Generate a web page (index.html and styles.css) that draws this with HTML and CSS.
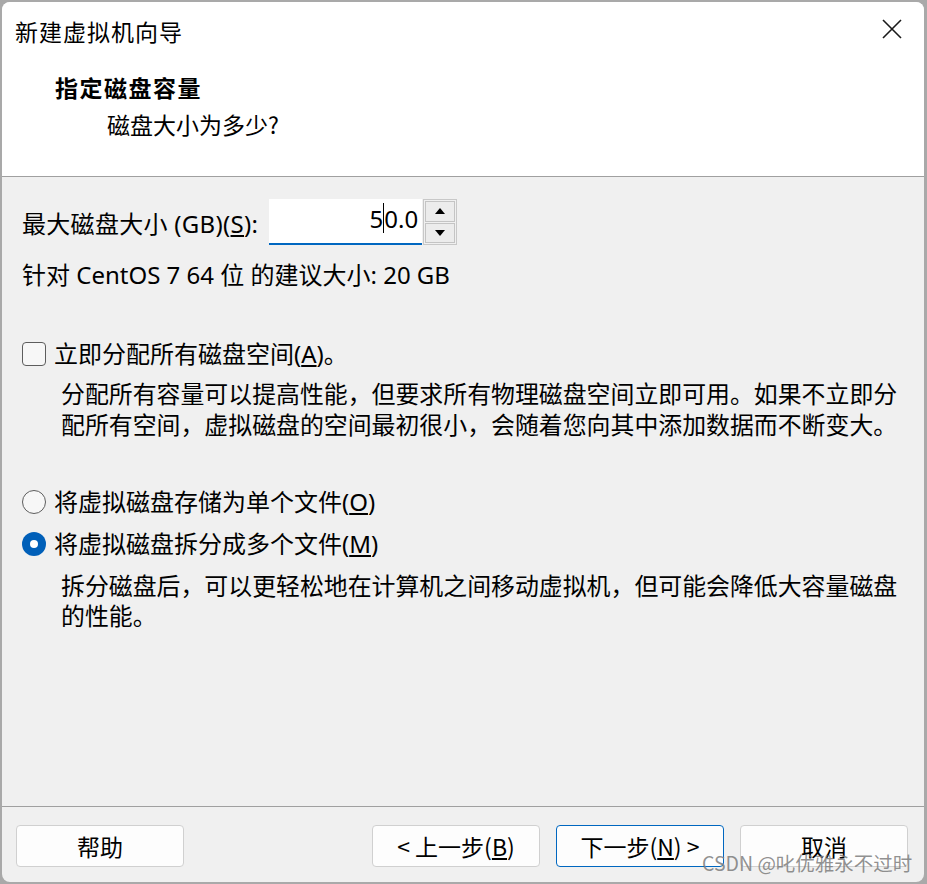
FILE: index.html
```html
<!DOCTYPE html>
<html lang="zh-CN">
<head>
<meta charset="utf-8">
<title>新建虚拟机向导</title>
<link rel="stylesheet" href="styles.css">
</head>
<body>
<div class="window">
  <div class="header">
    <div class="titlebar">
      <span class="title">新建虚拟机向导</span>
      <svg class="close" width="20" height="20" viewBox="0 0 20 20"><path d="M1 1 L19 19 M19 1 L1 19" stroke="#1a1a1a" stroke-width="1.6" fill="none"/></svg>
    </div>
    <div class="heading">指定磁盘容量</div>
    <div class="subheading">磁盘大小为多少?</div>
  </div>
  <div class="content">
    <div class="size-row">
      <span class="size-label">最大磁盘大小 (GB)(<u>S</u>):</span>
      <div class="spin">
        <div class="spin-input">5<span class="caret"></span>0.0</div>
        <div class="spin-btns">
          <div class="spin-btn"><span class="tri-up"></span></div>
          <div class="spin-btn"><span class="tri-down"></span></div>
        </div>
      </div>
    </div>
    <div class="recommend">针对 CentOS 7 64 位 的建议大小: 20 GB</div>
    <div class="option first">
      <span class="checkbox"></span>
      <span>立即分配所有磁盘空间(<u>A</u>)。</span>
    </div>
    <div class="desc">
      <div class="desc-line">分配所有容量可以提高性能，但要求所有物理磁盘空间立即可用。如果不立即分</div>
      <div class="desc-line">配所有空间，虚拟磁盘的空间最初很小，会随着您向其中添加数据而不断变大。</div>
    </div>
    <div class="option second">
      <span class="radio"></span>
      <span>将虚拟磁盘存储为单个文件(<u>O</u>)</span>
    </div>
    <div class="option third">
      <span class="radio checked"></span>
      <span>将虚拟磁盘拆分成多个文件(<u>M</u>)</span>
    </div>
    <div class="desc tight">
      <div class="desc-line">拆分磁盘后，可以更轻松地在计算机之间移动虚拟机，但可能会降低大容量磁盘</div>
      <div class="desc-line">的性能。</div>
    </div>
  </div>
  <div class="footer">
    <div class="btn">帮助</div>
    <div class="spacer"></div>
    <div class="btn">&lt; 上一步(<u>B</u>)</div>
    <div class="btn default">下一步(<u>N</u>) &gt;</div>
    <div class="btn">取消</div>
  </div>
</div>
<div class="watermark">CSDN @叱优雅永不过时</div>
</body>
</html>
```
FILE: styles.css
```css
* { box-sizing: border-box; }
html, body { margin: 0; padding: 0; }
body {
  width: 927px;
  height: 884px;
  background: #a9a9a9;
  font-family: "Noto Sans", "Noto Sans CJK SC", sans-serif;
  color: #000;
  position: relative;
  overflow: hidden;
}
.window {
  margin: 2px 3px 0 2px;
  height: 880px;
  background: #f0f0f0;
  border-radius: 8px;
  overflow: hidden;
  display: flex;
  flex-direction: column;
}
.header {
  height: 175px;
  background: #fff;
  border-bottom: 1px solid #a0a0a0;
  flex: none;
}
.titlebar {
  height: 56px;
  display: flex;
  align-items: center;
  justify-content: space-between;
  padding: 0 22px 0 13px;
}
.title {
  font-family: "Noto Sans CJK SC", sans-serif;
  font-size: 23px;
  letter-spacing: 1px;
  line-height: 30px;
  margin-top: 2px;
}
.close { display: block; margin-top: -2px; }
.heading {
  margin-top: 12px;
  padding-left: 53px;
  font-family: "Noto Sans CJK SC", sans-serif;
  font-size: 23px;
  font-weight: bold;
  letter-spacing: 1.5px;
  line-height: 34px;
}
.subheading {
  margin-top: 3px;
  padding-left: 105px;
  font-family: "Noto Sans CJK SC", sans-serif;
  font-size: 23px;
  line-height: 34px;
}
.content {
  flex: 1;
  padding: 22px 0 0 20px;
  font-size: 24px;
}
.size-row {
  display: flex;
  align-items: center;
  height: 46px;
}
.size-label { line-height: 32px; margin-top: 4px; letter-spacing: 0.3px; }
.spin {
  margin-left: 11px;
  display: flex;
  height: 46px;
}
.spin-input {
  width: 153px;
  height: 46px;
  background: #fff;
  border-bottom: 2px solid #0067c0;
  text-align: right;
  padding-right: 4px;
  line-height: 40px;
  font-size: 24px;
}
.caret {
  display: inline-block;
  width: 1px;
  height: 30px;
  background: #000;
  vertical-align: -5px;
}
.spin-btns {
  width: 34px;
  height: 46px;
  margin-left: 1px;
  border: 1px solid #c8c8c8;
  background: #f0f0f0;
  display: flex;
  flex-direction: column;
  gap: 1px;
  padding: 1px;
}
.spin-btn {
  flex: 1;
  background: #ececec;
  border: 1px solid #c4c4c4;
  display: flex;
  align-items: center;
  justify-content: center;
}
.tri-up, .tri-down {
  width: 0; height: 0;
  border-left: 5px solid transparent;
  border-right: 5px solid transparent;
}
.tri-up { border-bottom: 6px solid #000; }
.tri-down { border-top: 6px solid #000; }
.recommend {
  margin-top: 14px;
  line-height: 32px;
}
.option {
  display: flex;
  align-items: center;
  gap: 8px;
  height: 32px;
  line-height: 32px;
}
.option.first { margin-top: 47px; }
.option.second { margin-top: 47px; }
.option.third { margin-top: 10px; }
.checkbox {
  width: 24px;
  height: 24px;
  border: 1.5px solid #5d5d5d;
  border-radius: 4px;
  background: #f7f7f7;
  flex: none;
}
.radio {
  width: 24px;
  height: 24px;
  border: 1.5px solid #5d5d5d;
  border-radius: 50%;
  background: #f7f7f7;
  flex: none;
  position: relative;
}
.radio.checked {
  border: none;
  background: #005fb8;
}
.radio.checked::after {
  content: "";
  position: absolute;
  left: 8px; top: 8px;
  width: 8px; height: 8px;
  border-radius: 50%;
  background: #fff;
}
.desc {
  margin: 7px 0 0 39px;
  font-family: "Noto Sans CJK SC", sans-serif;
  font-size: 23.9px;
}
.desc-line {
  height: 31px;
  line-height: 31px;
  white-space: nowrap;
}
.desc.tight { margin-top: 10px; }
.desc.tight .desc-line { height: 30px; line-height: 30px; }
.footer {
  height: 76px;
  flex: none;
  border-top: 1px solid #a0a0a0;
  padding: 18px 16px 0 14px;
  display: flex;
  gap: 16px;
  align-items: flex-start;
}
.spacer { flex: 1; }
.btn {
  width: 168px;
  height: 42px;
  background: #fdfdfd;
  border: 1px solid #d0d0d0;
  border-radius: 4px;
  display: flex;
  align-items: center;
  justify-content: center;
  font-family: "Noto Sans CJK SC", sans-serif;
  font-size: 23px;
  line-height: 30px;
}
.btn.default {
  border: 1.5px solid #0067c0;
}
.watermark {
  position: absolute;
  left: 702px;
  top: 850px;
  font-family: "Noto Sans CJK SC", sans-serif;
  font-size: 19.5px;
  line-height: 26px;
  color: rgba(125, 125, 125, 0.85);
  white-space: nowrap;
}
```
